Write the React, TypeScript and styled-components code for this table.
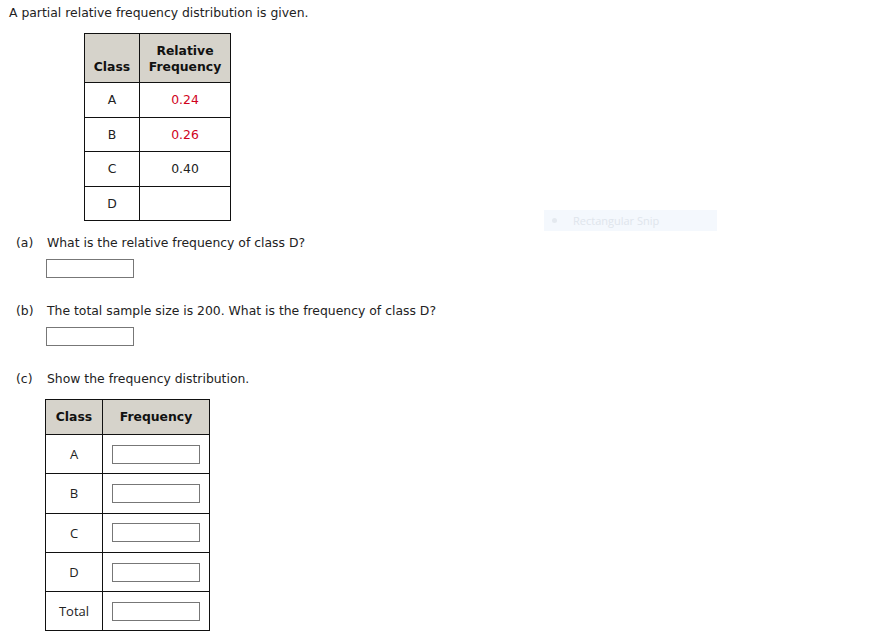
import React from "react";
import styled, { createGlobalStyle } from "styled-components";

const Global = createGlobalStyle`
  html, body { margin: 0; padding: 0; background: #fff; }
  body { font-family: "DejaVu Sans", Verdana, sans-serif; font-size: 12.4px; color: #222; }
`;

const Page = styled.div`
  position: relative;
  width: 871px;
  height: 644px;
  padding: 5px 0 0 9px;
  box-sizing: border-box;
`;

const Intro = styled.div`
  line-height: 16px;
  height: 16px;
`;

const Table = styled.table<{ $left: number; $top: number }>`
  border-collapse: collapse;
  margin-left: ${(p) => p.$left}px;
  margin-top: ${(p) => p.$top}px;
  font-size: 12.4px;
`;

const Head = styled.th<{ $w: number; $h: number; $bottom?: boolean }>`
  background: #d6d3cb;
  border: 1px solid #111;
  width: ${(p) => p.$w}px;
  height: ${(p) => p.$h}px;
  padding: 0 0 ${(p) => (p.$bottom ? "7px" : "0")};
  font-weight: bold;
  font-size: 12.4px;
  line-height: 16px;
  color: #111;
  text-align: center;
  vertical-align: ${(p) => (p.$bottom ? "bottom" : "middle")};
  box-sizing: border-box;
`;

const Cell = styled.td<{ $h: number; $red?: boolean }>`
  border: 1px solid #111;
  height: ${(p) => p.$h}px;
  padding: 0;
  text-align: center;
  vertical-align: middle;
  color: ${(p) => (p.$red ? "#d0021b" : "#222")};
  box-sizing: border-box;
`;

const LabelCell = styled(Cell)`
  font-family: "Open Sans", "Noto Sans", sans-serif;
  font-size: 13px;
`;

const Question = styled.div<{ $top: number }>`
  display: flex;
  margin-top: ${(p) => p.$top}px;
  line-height: 16px;
  padding-left: 7px;
`;

const Tag = styled.span`
  width: 31px;
`;

const Answer = styled.div`
  margin: 8px 0 0 37px;
`;

const Box = styled.div<{ $w: number; $center?: boolean }>`
  width: ${(p) => p.$w}px;
  height: 19px;
  border: 1px solid #777;
  box-sizing: border-box;
  background: #fff;
  margin: ${(p) => (p.$center ? "0 auto" : "0")};
`;

const Snip = styled.div`
  position: absolute;
  left: 544px;
  top: 210px;
  width: 173px;
  height: 21px;
  background: #f4f8fd;
  display: flex;
  align-items: center;
  font-family: "Open Sans", sans-serif;
  font-size: 11px;
  color: #dfe5ec;
`;

const Dot = styled.span`
  width: 5px;
  height: 5px;
  border-radius: 50%;
  background: #e4e9ef;
  margin: 0 16px 0 8px;
`;

export default function App() {
  const rel: [string, string, boolean][] = [
    ["A", "0.24", true],
    ["B", "0.26", true],
    ["C", "0.40", false],
    ["D", "", false],
  ];
  const freq = ["A", "B", "C", "D", "Total"];
  return (
    <Page>
      <Global />
      <Intro>A partial relative frequency distribution is given.</Intro>
      <Table $left={75} $top={12}>
        <thead>
          <tr>
            <Head $w={55} $h={49} $bottom>Class</Head>
            <Head $w={91} $h={49} $bottom>
              Relative
              <br />
              Frequency
            </Head>
          </tr>
        </thead>
        <tbody>
          {rel.map(([c, v, red]) => (
            <tr key={c}>
              <Cell $h={34.5}>{c}</Cell>
              <Cell $h={34.5} $red={red}>{v}</Cell>
            </tr>
          ))}
        </tbody>
      </Table>
      <Question $top={14}>
        <Tag>(a)</Tag>
        <span>What is the relative frequency of class D?</span>
      </Question>
      <Answer>
        <Box $w={88} />
      </Answer>
      <Question $top={25}>
        <Tag>(b)</Tag>
        <span>The total sample size is 200. What is the frequency of class D?</span>
      </Question>
      <Answer>
        <Box $w={88} />
      </Answer>
      <Question $top={25}>
        <Tag>(c)</Tag>
        <span>Show the frequency distribution.</span>
      </Question>
      <Table $left={36} $top={12}>
        <thead>
          <tr>
            <Head $w={57} $h={35}>Class</Head>
            <Head $w={107} $h={35}>Frequency</Head>
          </tr>
        </thead>
        <tbody>
          {freq.map((c) => (
            <tr key={c}>
              <LabelCell $h={39.3}>{c}</LabelCell>
              <Cell $h={39.3}>
                <Box $w={88} $center />
              </Cell>
            </tr>
          ))}
        </tbody>
      </Table>
      <Snip>
        <Dot />
        Rectangular Snip
      </Snip>
    </Page>
  );
}
